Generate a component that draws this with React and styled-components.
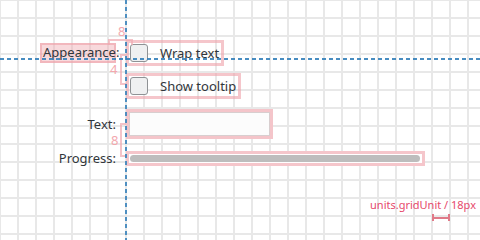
import React from 'react';
import styled, { createGlobalStyle } from 'styled-components';

const Global = createGlobalStyle`
  body {
    margin: 0;
    font-family: "Noto Sans", "Open Sans", sans-serif;
    color: #31363b;
  }
`;

const pink = 'rgba(238, 160, 168, 0.6)';

const Canvas = styled.div`
  position: relative;
  width: 480px;
  height: 240px;
  overflow: hidden;
  box-sizing: border-box;
  padding-top: 40px;
  background-color: #fff;
  background-image: linear-gradient(to right, #e8e8e8 2px, transparent 2px),
    linear-gradient(to bottom, #e8e8e8 2px, transparent 2px);
  background-size: 18px 18px;
  background-position: 17px 17px;
`;

const Form = styled.div`
  display: flex;
  flex-direction: column;
`;

const Row = styled.div`
  display: grid;
  grid-template-columns: 116px auto;
  column-gap: 10px;
  align-items: center;
  margin-top: ${(p) => p.$top || 0}px;
`;

const Label = styled.div`
  justify-self: end;
  font-size: 13px;
  line-height: 16px;
  white-space: nowrap;
`;

const BoxedLabel = styled(Label)`
  box-sizing: border-box;
  width: 76px;
  height: 20px;
  padding-left: 1px;
  background: rgba(240, 170, 178, 0.45);
  border: 2px solid ${pink};
  line-height: 15px;
`;

const Field = styled.div`
  justify-self: start;
  box-sizing: border-box;
  border: 3px solid ${pink};
`;

const CheckItem = styled(Field)`
  display: flex;
  align-items: center;
  gap: 12px;
  height: 26px;
  padding: 0 2px 0 1px;
  font-size: 13px;
`;

const Box = styled.span`
  box-sizing: border-box;
  width: 18px;
  height: 18px;
  border: 1px solid #8f9295;
  border-radius: 3px;
  background: #eff0f1;
`;

const TextField = styled(Field)`
  width: 147px;
  height: 30px;
  background: #fcfcfc;
  box-shadow: inset 0 0 0 1px rgba(150, 120, 124, 0.35);
`;

const Progress = styled(Field)`
  width: 299px;
  height: 15px;
  padding: 1px 2px 0 1px;
  background: #fff;
`;

const Bar = styled.div`
  height: 7px;
  border-radius: 4px;
  background: #bdbdbd;
`;

const GuideV = styled.div`
  position: absolute;
  left: 125px;
  top: 0;
  width: 2px;
  height: 240px;
  background: repeating-linear-gradient(to bottom, rgba(52, 128, 186, 0.85) 0 4px, transparent 4px 7px);
`;

const GuideH = styled.div`
  position: absolute;
  left: 0;
  top: 58px;
  width: 480px;
  height: 2px;
  background: repeating-linear-gradient(to right, rgba(52, 128, 186, 0.9) 0 4px, transparent 4px 7px);
`;

const Bracket = styled.div`
  position: absolute;
  box-sizing: border-box;
  border: 2px solid rgba(240, 170, 176, 0.7);
  border-${(p) => p.$open}: none;
`;

const Spacing = styled.span`
  position: absolute;
  font-size: 13px;
  line-height: 13px;
  color: #f3a8ae;
`;

const Legend = styled.div`
  position: absolute;
  right: 4px;
  top: 198px;
  display: flex;
  flex-direction: column;
  align-items: flex-end;
  gap: 2px;
  font-size: 11px;
  line-height: 14px;
  color: #e6496b;
`;

const Measure = styled.div`
  width: 18px;
  height: 7px;
  margin-right: 26px;
  box-sizing: border-box;
  border-left: 2px solid #e07a88;
  border-right: 2px solid #e07a88;
  background: linear-gradient(#e07a88, #e07a88) center / 100% 2px no-repeat;
`;

export default function App() {
  return (
    <>
      <Global />
      <Canvas>
        <Form>
          <Row>
            <BoxedLabel>Appearance:</BoxedLabel>
            <CheckItem>
              <Box />
              <span>Wrap text</span>
            </CheckItem>
          </Row>
          <Row $top={7}>
            <span />
            <CheckItem>
              <Box />
              <span>Show tooltip</span>
            </CheckItem>
          </Row>
          <Row $top={10}>
            <Label>Text:</Label>
            <TextField />
          </Row>
          <Row $top={11}>
            <Label>Progress:</Label>
            <Progress>
              <Bar />
            </Progress>
          </Row>
        </Form>

        <Bracket $open="bottom" style={{ left: 108, top: 39, width: 25, height: 6 }} />
        <Spacing style={{ left: 118, top: 25 }}>8</Spacing>
        <Bracket $open="right" style={{ left: 120, top: 54, width: 6, height: 31 }} />
        <Spacing style={{ left: 110, top: 63 }}>4</Spacing>
        <Bracket $open="right" style={{ left: 120, top: 123, width: 6, height: 34 }} />
        <Spacing style={{ left: 111, top: 134 }}>8</Spacing>

        <GuideV />
        <GuideH />

        <Legend>
          <span>units.gridUnit / 18px</span>
          <Measure />
        </Legend>
      </Canvas>
    </>
  );
}
